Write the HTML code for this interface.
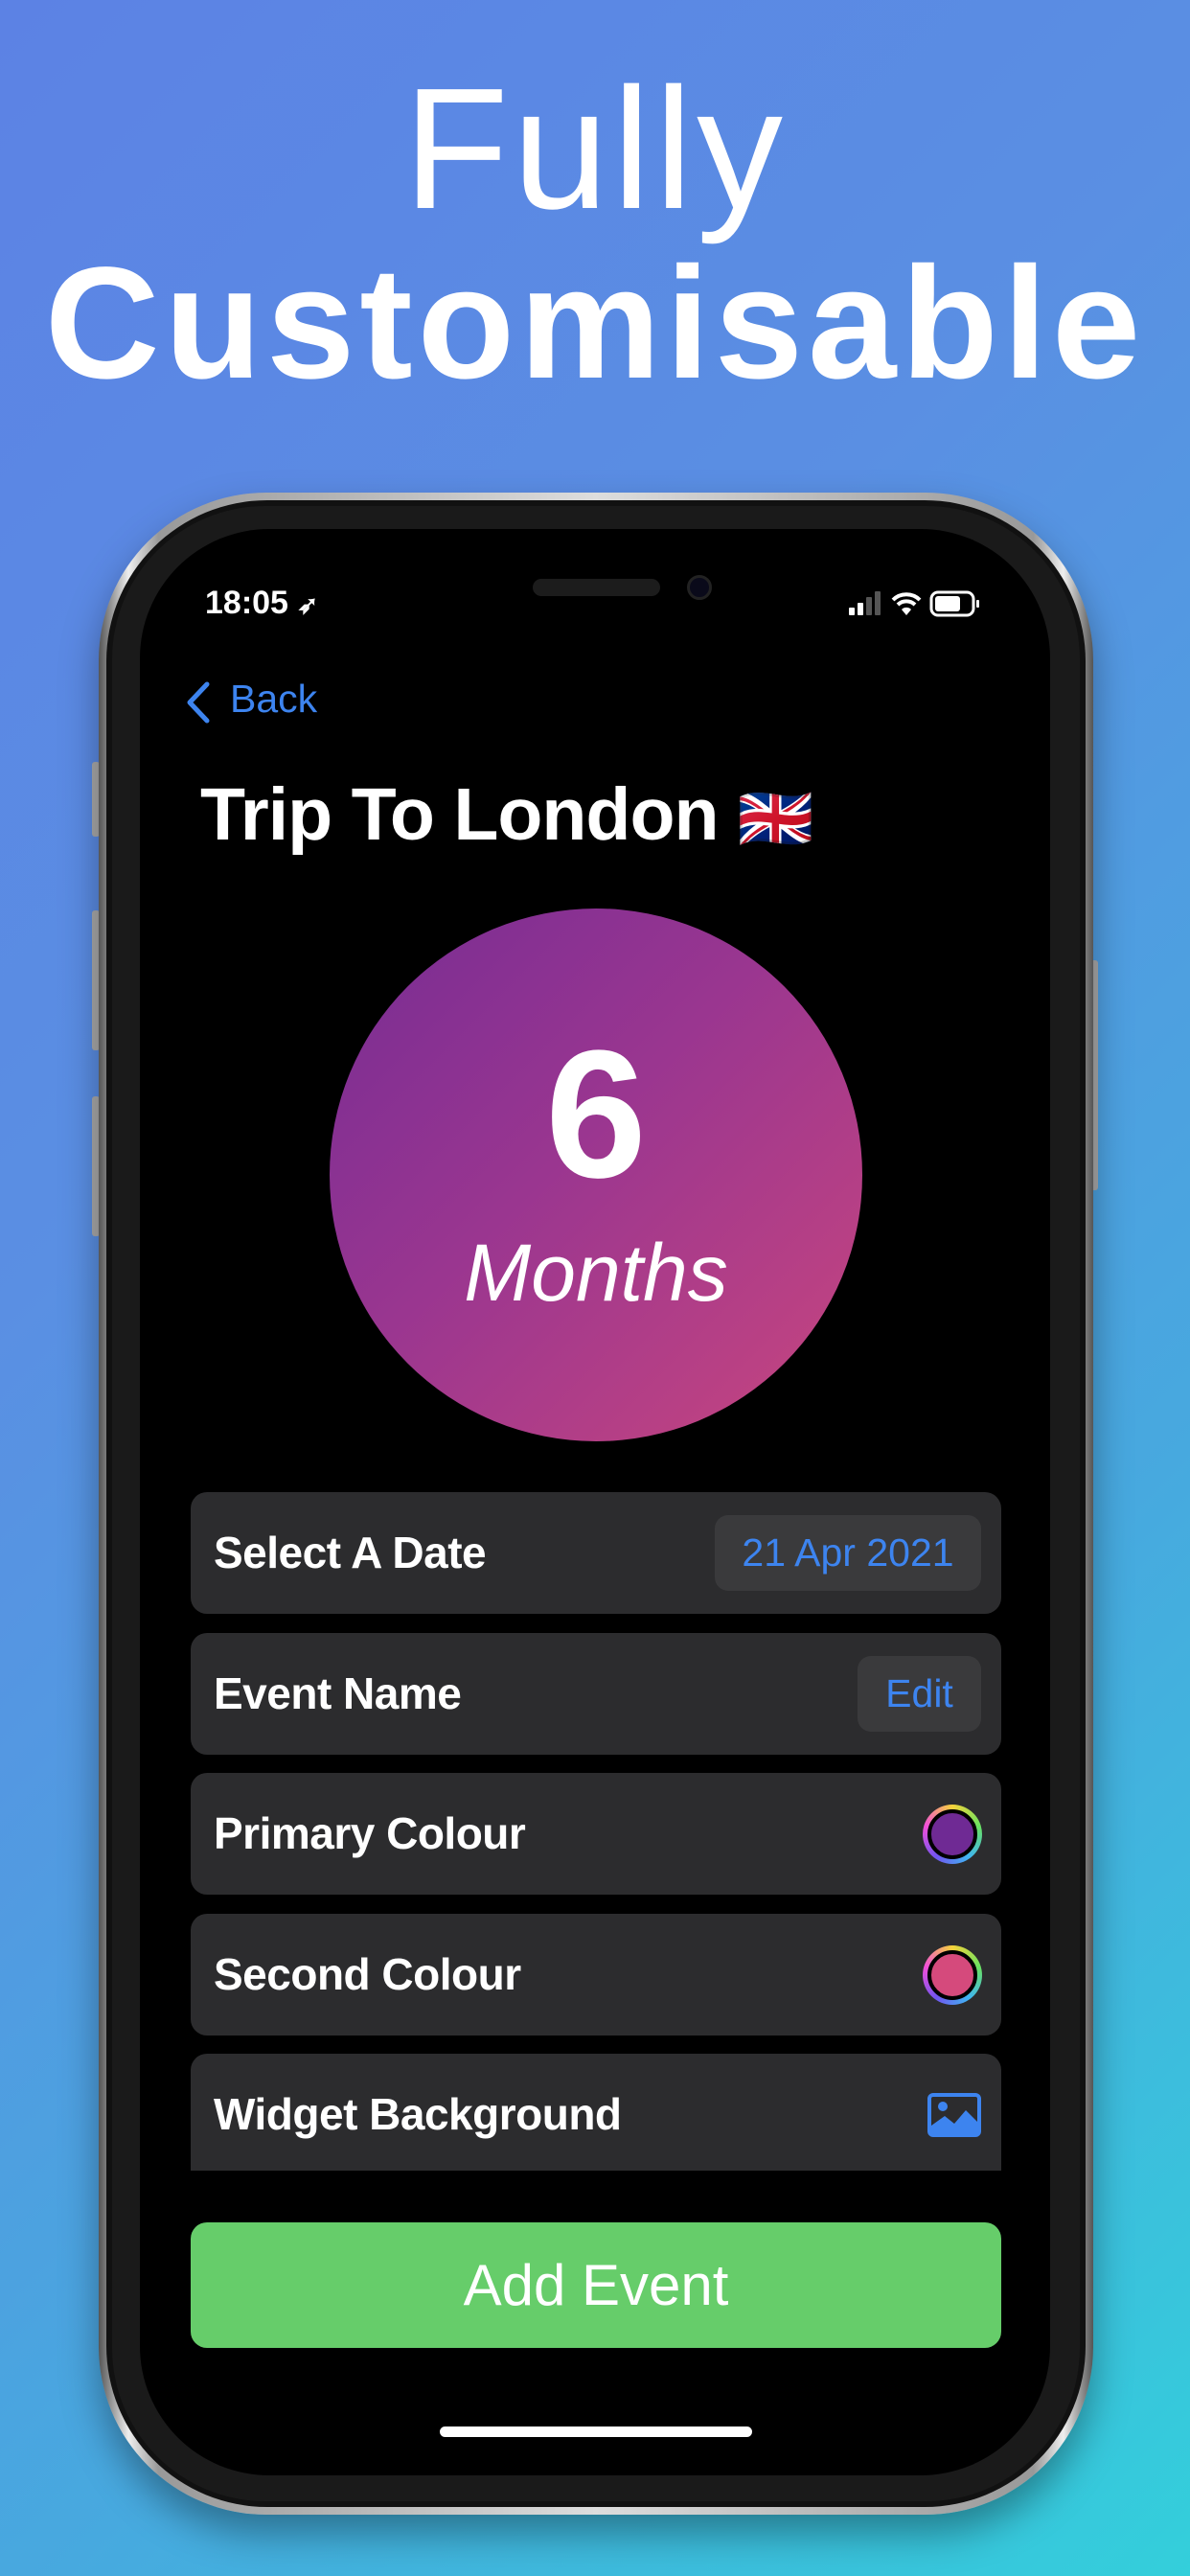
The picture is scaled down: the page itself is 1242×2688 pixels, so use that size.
<!DOCTYPE html>
<html><head><meta charset="utf-8"><style>
*{margin:0;padding:0;box-sizing:border-box}
body{width:1242px;height:2688px;overflow:hidden;position:relative;font-family:"Liberation Sans",sans-serif;
background:linear-gradient(135deg,#5c82e4 0%,#5a8fe3 35%,#47a9df 70%,#33cfdb 100%);}
.t{position:absolute;left:0;width:1242px;text-align:center;color:#fff}
.phone{position:absolute;left:103px;top:514px;width:1038px;height:2110px;border-radius:175px;
background:linear-gradient(90deg,#555,#eee 3%,#999 6%,#ddd 50%,#999 94%,#eee 97%,#555);box-shadow:0 20px 40px rgba(0,0,0,.35)}
.p2{position:absolute;left:8px;top:8px;right:8px;bottom:8px;border-radius:168px;background:#111;}
.p3{position:absolute;left:14px;top:14px;right:14px;bottom:14px;border-radius:160px;background:#1a1a1a;}
.screen{position:absolute;left:43px;top:38px;width:950px;height:2031px;border-radius:135px;background:#000;overflow:hidden}
.btn{position:absolute;background:#aaa;width:8px;border-radius:3px}
.row{position:absolute;left:199px;width:846px;height:127px;border-radius:17px;background:#2c2c2e;}
.lab{position:absolute;left:24px;top:0;line-height:127px;font-size:46px;font-weight:bold;color:#fff;letter-spacing:-.5px}
.pill{position:absolute;top:24px;height:79px;border-radius:14px;background:#3a3a3c;color:#3d84ef;font-size:41px;line-height:79px;text-align:center}
.dot{position:absolute;right:20px;top:33px;width:62px;height:62px;border-radius:50%;
background:conic-gradient(#f5d33a,#6be25f,#3fb6f2,#7254f0,#f24fd8,#f5d33a);padding:5px}
.dot i{display:block;width:100%;height:100%;border-radius:50%;border:4px solid #000}
</style></head><body>
<div class="t" style="top:56px;font-size:180px;letter-spacing:4px;line-height:200px">Fully</div>
<div class="t" style="top:248px;font-size:166px;font-weight:bold;letter-spacing:5px;line-height:180px">Customisable</div>
<div class="btn" style="left:96px;top:795px;height:78px"></div>
<div class="btn" style="left:96px;top:950px;height:146px"></div>
<div class="btn" style="left:96px;top:1144px;height:146px"></div>
<div class="btn" style="left:1138px;top:1002px;height:240px"></div>
<div class="phone"><div class="p2"></div><div class="p3"></div>
<div class="screen">
 <div style="position:absolute;left:410px;top:52px;width:133px;height:18px;border-radius:9px;background:#1c1c1c"></div>
 <div style="position:absolute;left:571px;top:48px;width:26px;height:26px;border-radius:50%;background:#0a0a1a;border:3px solid #222"></div>
 <div style="position:absolute;left:68px;top:58px;color:#fff;font-size:34px;font-weight:bold">18:05 <span style="font-size:26px">➶</span></div>
 <svg style="position:absolute;left:740px;top:62px" width="150" height="32" viewBox="0 0 150 32">
  <rect x="0" y="20" width="6" height="8" rx="1" fill="#fff"/><rect x="9" y="15" width="6" height="13" rx="1" fill="#fff"/><rect x="18" y="9" width="6" height="19" rx="1" fill="#555"/><rect x="27" y="3" width="6" height="25" rx="1" fill="#555"/>
  <path d="M46 12a20 20 0 0 1 28 0M51 17a13 13 0 0 1 18 0" stroke="#fff" stroke-width="4" fill="none"/><path d="M55 22l5 6 5-6a7 7 0 0 0-10 0z" fill="#fff"/>
  <rect x="86" y="4" width="44" height="24" rx="7" stroke="#fff" stroke-width="3" fill="none"/><rect x="90" y="8" width="26" height="16" rx="3" fill="#fff"/><rect x="133" y="12" width="3" height="8" rx="1" fill="#fff"/>
 </svg>
 <svg style="position:absolute;left:46px;top:158px" width="30" height="46" viewBox="0 0 30 46"><path d="M24 4L6 23l18 19" stroke="#3d84ef" stroke-width="5" fill="none" stroke-linecap="round" stroke-linejoin="round"/></svg>
 <div style="position:absolute;left:94px;top:154px;color:#3d84ef;font-size:41px">Back</div>
 <div style="position:absolute;left:63px;top:254px;color:#fff;font-size:77px;font-weight:bold;letter-spacing:-1px">Trip To London <span style="font-size:64px">🇬🇧</span></div>
 <div style="position:absolute;left:198px;top:396px;width:556px;height:556px;border-radius:50%;background:linear-gradient(135deg,#762c94 0%,#9a3690 45%,#c9467e 100%)">
  <div style="position:absolute;left:0;width:100%;top:120px;text-align:center;color:#fff;font-size:190px;font-weight:bold;line-height:190px">6</div>
  <div style="position:absolute;left:0;width:100%;top:330px;text-align:center;color:#fff;font-size:84px;font-style:italic;line-height:100px">Months</div>
 </div>
</div>
</div>
<div class="row" style="top:1557px"><div class="lab">Select A Date</div><div class="pill" style="left:547px;width:278px">21 Apr 2021</div></div>
<div class="row" style="top:1704px"><div class="lab">Event Name</div><div class="pill" style="left:696px;width:129px">Edit</div></div>
<div class="row" style="top:1850px"><div class="lab">Primary Colour</div><div class="dot"><i style="background:#6f2a94"></i></div></div>
<div class="row" style="top:1997px"><div class="lab">Second Colour</div><div class="dot"><i style="background:#d54a7c"></i></div></div>
<div class="row" style="top:2143px;height:122px;border-radius:17px 17px 0 0"><div class="lab">Widget Background</div>
 <svg style="position:absolute;left:769px;top:41px" width="56" height="46" viewBox="0 0 56 46"><rect x="2" y="2" width="52" height="42" rx="4" fill="none" stroke="#3d84ef" stroke-width="4"/><circle cx="16" cy="14" r="5" fill="#3d84ef"/><path d="M4 42L4 34 18 24 28 32 40 18 52 30 52 42z" fill="#3d84ef"/></svg></div>
<div style="position:absolute;left:199px;top:2319px;width:846px;height:131px;border-radius:17px;background:#66cd6a;color:#fff;font-size:60px;text-align:center;line-height:131px">Add Event</div>
<div style="position:absolute;left:459px;top:2532px;width:326px;height:11px;border-radius:6px;background:#fff"></div>
</body></html>
